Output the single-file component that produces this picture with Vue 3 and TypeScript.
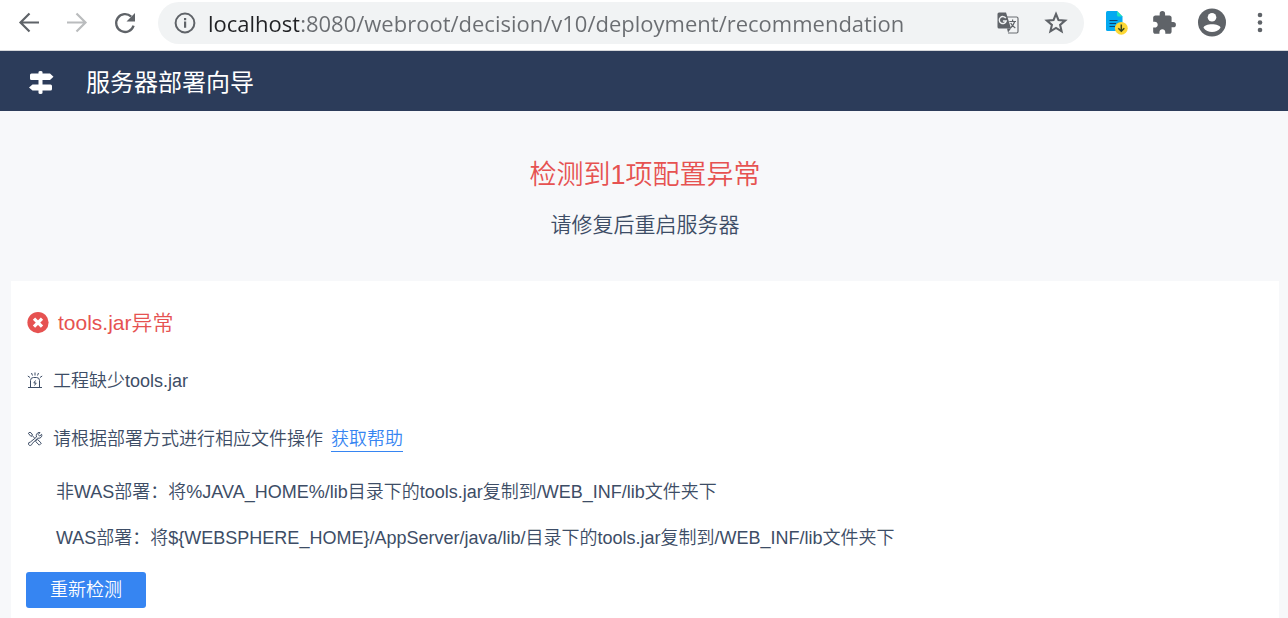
<script setup lang="ts">
import { ref } from 'vue'

interface Fix {
  id: number
  text: string
}

const address = ref('localhost:8080/webroot/decision/v10/deployment/recommendation')

const fixes: Fix[] = [
  { id: 1, text: '非WAS部署：将%JAVA_HOME%/lib目录下的tools.jar复制到/WEB_INF/lib文件夹下' },
  { id: 2, text: 'WAS部署：将${WEBSPHERE_HOME}/AppServer/java/lib/目录下的tools.jar复制到/WEB_INF/lib文件夹下' },
]
</script>

<template>
  <div class="window">
    <div class="toolbar">
      <button class="tool nav" type="button" aria-label="后退">
        <svg width="24" height="24" viewBox="0 0 24 24" fill="none" stroke="#5f6368" stroke-width="2.2">
          <path d="M22 11.500H3.500M12.500 2.500L3.500 11.500L12.500 20.500" />
        </svg>
      </button>
      <button class="tool nav" type="button" aria-label="前进" disabled>
        <svg width="24" height="24" viewBox="0 0 24 24" fill="none" stroke="#babcbe" stroke-width="2.2">
          <path d="M2 11.500H20.500M11.500 2.500L20.500 11.500L11.500 20.500" />
        </svg>
      </button>
      <button class="tool nav" type="button" aria-label="重新加载">
        <svg width="24" height="24" viewBox="0 0 24 24">
          <path d="M18.2 5.6A8.9 8.9 0 1 0 20.6 14.6" fill="none" stroke="#5f6368" stroke-width="2.3" />
          <path d="M22 2V10.5H13.5Z" fill="#5f6368" />
        </svg>
      </button>
      <div class="omnibox">
        <button class="tool info" type="button" aria-label="查看网站信息">
          <svg width="22" height="22" viewBox="0 0 22 22">
            <circle cx="11" cy="11" r="9.4" fill="none" stroke="#5f6368" stroke-width="2" />
            <path d="M10 9.6h2.2v6.2H10zM10 6h2.2v2.2H10z" fill="#5f6368" />
          </svg>
        </button>
        <input v-model="address" class="address" type="text" aria-label="地址栏" spellcheck="false" />
        <button class="tool" type="button" aria-label="翻译此页">
          <svg width="24" height="24" viewBox="0 0 24 24">
            <path d="M10 6H20.5Q22 6 22 7.500V20.500Q22 22 20.500 22H12" fill="none" stroke="#6b6e72" stroke-width="1.2" />
            <path d="M3 1.500H10L15 17.500H3Q1.500 17.500 1.500 16V3Q1.500 1.500 3 1.500Z" fill="#5f6368" />
            <path d="M11 17.500H15L12 21.500Z" fill="#5f6368" />
            <path d="M9.800 7.200A3.500 3.500 0 1 0 10.200 10H6.900" fill="none" stroke="#f1f3f4" stroke-width="1.400" />
            <path d="M13.300 10.500H20M16.600 8.500V10.500M18.700 10.500Q17.500 14.500 14.500 17M14.700 12Q16 15 19.300 17" fill="none" stroke="#5f6368" stroke-width="1.200" />
          </svg>
        </button>
        <button class="tool" type="button" aria-label="为此页添加书签">
          <svg width="24" height="24" viewBox="0 0 24 24">
            <path
              d="M12 3L14.500 9.100L21.100 9.600L16.100 13.900L17.600 20.300L12 16.900L6.400 20.300L7.900 13.900L2.900 9.600L9.500 9.100Z"
              fill="none"
              stroke="#5f6368"
              stroke-width="2.100"
            />
          </svg>
        </button>
      </div>
      <div class="extensions">
        <button class="tool" type="button" aria-label="下载文档">
          <svg width="24" height="26" viewBox="0 0 24 26">
            <path d="M3.500 1H13L18.500 6.500V21H3.500Q2 21 2 19.500V2.500Q2 1 3.500 1Z" fill="#04a9f0" />
            <path d="M13 1L18.500 6.500H14.500Q13 6.500 13 5Z" fill="#20e4bd" />
            <path d="M5.500 10.500H13.500M5.500 13.500H12M5.500 16.500H11" stroke="#0b4573" stroke-width="1.200" />
            <circle cx="17.300" cy="18.300" r="6.400" fill="#fdd835" />
            <path d="M17.300 14.500V21M14.300 18.300L17.300 21.300L20.300 18.300" fill="none" stroke="#37451f" stroke-width="1.500" />
          </svg>
        </button>
        <button class="tool" type="button" aria-label="扩展程序">
          <svg width="26" height="26" viewBox="0 0 24 24" fill="#5f6368">
            <path
              d="M20.500 11H19V7c0-1.100-.9-2-2-2h-4V3.500a2.500 2.500 0 0 0-5 0V5H4c-1.100 0-1.990.9-1.990 2v3.800H3.500c1.490 0 2.700 1.210 2.700 2.700s-1.210 2.700-2.700 2.700H2V20c0 1.100.9 2 2 2h3.800v-1.500c0-1.490 1.210-2.700 2.700-2.700s2.700 1.210 2.700 2.700V22H17c1.100 0 2-.9 2-2v-4h1.500a2.500 2.500 0 0 0 0-5z"
            />
          </svg>
        </button>
        <button class="tool" type="button" aria-label="个人资料">
          <svg width="30" height="30" viewBox="0 0 30 30">
            <circle cx="15" cy="14.500" r="14" fill="#5f6368" />
            <circle cx="15" cy="9.300" r="4.300" fill="#fff" />
            <path d="M6.500 19.700C6.800 15 23.200 15 23.500 19.700C19.500 25.500 10.500 25.500 6.500 19.700Z" fill="#fff" />
          </svg>
        </button>
        <button class="tool" type="button" aria-label="菜单">
          <svg width="8" height="24" viewBox="0 0 8 24" fill="#5f6368">
            <circle cx="4" cy="4" r="2.300" />
            <circle cx="4" cy="11.500" r="2.300" />
            <circle cx="4" cy="19" r="2.300" />
          </svg>
        </button>
      </div>
    </div>

    <header class="banner">
      <svg width="26" height="26" viewBox="0 0 26 26" fill="#fff" aria-hidden="true">
        <path d="M10.500 2Q10.500 1 12.500 1T14.500 2V3.500H22L25.500 6.700L22 10H14.500V14.500H22.500Q24 14.500 24 16V19Q24 20.500 22.500 20.500H14.500V23Q14.500 24 12.500 24T10.500 23V20.500H4.500L1 17.500L4.500 14.500H10.500V10H3.500Q2 10 2 8.500V5Q2 3.500 3.500 3.500H10.500Z" />
      </svg>
      <span class="banner-title">服务器部署向导</span>
    </header>

    <main class="content">
      <section class="summary">
        <h1>检测到1项配置异常</h1>
        <p>请修复后重启服务器</p>
      </section>

      <section class="card">
        <h2 class="problem">
          <svg width="22" height="22" viewBox="0 0 22 22" aria-hidden="true">
            <circle cx="11" cy="10.600" r="10.600" fill="#e65251" />
            <path d="M7 6.600L15 14.600M15 6.600L7 14.600" stroke="#fff" stroke-width="3.200" />
          </svg>
          <span>tools.jar异常</span>
        </h2>
        <div class="row">
          <svg width="16" height="18" viewBox="0 0 16 18" fill="none" stroke="#3d4d66" stroke-width="1" aria-hidden="true">
            <path d="M1 15.500H15M3.500 15V8.500Q3.500 5.500 6.500 5.500H9.500Q12.500 5.500 12.500 8.500V15M8 .5V3.500M4.500 1L5.500 3.500M11.500 1L10.500 3.500M.8 4L3 5.500M15.200 4L13 5.500" />
            <path d="M8.500 8.500L6.800 11H9.200L7.500 13.500" />
          </svg>
          <span>工程缺少tools.jar</span>
        </div>
        <div class="row">
          <svg width="16" height="18" viewBox="0 0 16 18" fill="none" stroke="#3d4d66" stroke-width="1" aria-hidden="true">
            <path d="M1.300 3.300L3 2.200L5.200 4V5.500L7.500 8M4 6.500L1.300 3.300M4 6.500L5.200 5.500" />
            <path d="M9.300 9.800L10.700 9.600L14.300 13.200L12.300 15.200L8.800 11.600L9.300 9.800" />
            <path d="M13 2.500Q10.500 2 9.500 4.300Q9 5.600 9.500 7L3.400 12Q1 12.300 1.500 14.300Q2 15.800 3.700 15.400Q5 15 5 13.700L10.700 8.200Q13.300 8.700 14.500 6.800Q15.100 5.500 14.600 4.300L12.700 6.100L11.200 4.600Z" />
          </svg>
          <span>请根据部署方式进行相应文件操作</span>
          <a href="#help">获取帮助</a>
        </div>
        <ul class="fixes">
          <li v-for="fix in fixes" :key="fix.id">{{ fix.text }}</li>
        </ul>
        <button class="retry" type="button">重新检测</button>
      </section>
    </main>
  </div>
</template>

<style>
body {
  margin: 0;
}
</style>

<style scoped>
.window {
  display: flex;
  flex-direction: column;
  min-height: 100vh;
  background: #f7f8fa;
  color: #3d4d66;
  font-family: "Liberation Sans", "Noto Sans CJK SC", sans-serif;
  font-size: 18px;
  font-weight: 350;
  line-height: 24px;
}

.toolbar {
  display: flex;
  align-items: center;
  box-sizing: border-box;
  height: 51px;
  padding: 0 13px 5px 17px;
  background: #fff;
  border-bottom: 1px solid #d5d7da;
}

.tool {
  display: flex;
  flex: none;
  justify-content: center;
  padding: 0;
  border: 0;
  background: none;
}

.nav {
  margin-right: 24px;
}

.omnibox {
  display: flex;
  flex: 1;
  align-items: center;
  gap: 24px;
  box-sizing: border-box;
  height: 42px;
  min-width: 0;
  margin-left: -3px;
  padding: 0 16px;
  border-radius: 21px;
  background: #f1f3f4;
}

.info {
  margin-right: -12px;
}

.address {
  flex: 1;
  min-width: 0;
  height: 34px;
  padding: 0;
  border: 0;
  outline: 0;
  background: linear-gradient(to right, #202124 91px, #6a6d71 91px);
  background-clip: text;
  color: transparent;
  font-family: "Open Sans", "Noto Sans", sans-serif;
  font-size: 22px;
  font-weight: 400;
}

.extensions {
  display: flex;
  align-items: center;
  gap: 18px;
  margin-left: 17px;
}

.extensions .tool {
  width: 30px;
}

.banner {
  display: flex;
  align-items: center;
  gap: 32px;
  box-sizing: border-box;
  height: 60px;
  padding: 4px 28px 0;
  background: #2c3c5a;
  color: #fff;
}

.banner-title {
  font-size: 24px;
  font-weight: 400;
  line-height: 36px;
}

.content {
  display: flex;
  flex: 1;
  flex-direction: column;
  padding: 0 9px 0 11px;
}

.summary {
  padding: 44px 0 39px;
  text-align: center;
}

.summary h1 {
  margin: 0;
  color: #e65251;
  font-size: 27px;
  font-weight: 350;
  line-height: 40px;
}

.summary p {
  margin: 13px 0 0;
  font-size: 21px;
  line-height: 34px;
}

.card {
  flex: 1;
  padding: 26px 15px 10px;
  background: #fff;
}

.problem {
  display: flex;
  align-items: center;
  gap: 9px;
  margin: 0 0 28px 1px;
  color: #e65251;
  font-size: 21px;
  font-weight: 350;
  line-height: 32px;
}

.row {
  display: flex;
  align-items: center;
  gap: 10px;
  height: 28px;
  margin: 0 0 30px 1px;
}

.row a {
  margin-left: -2px;
  border-bottom: 1px solid #3685f2;
  color: #3685f2;
  text-decoration: none;
}

.fixes {
  margin: -3px 0 22px;
  padding: 0 0 0 30px;
  list-style: none;
}

.fixes li + li {
  margin-top: 22px;
}

.retry {
  min-width: 120px;
  height: 36px;
  padding: 0 24px;
  border: 0;
  border-radius: 3px;
  background: #3685f2;
  color: #fff;
  font: inherit;
}
</style>
